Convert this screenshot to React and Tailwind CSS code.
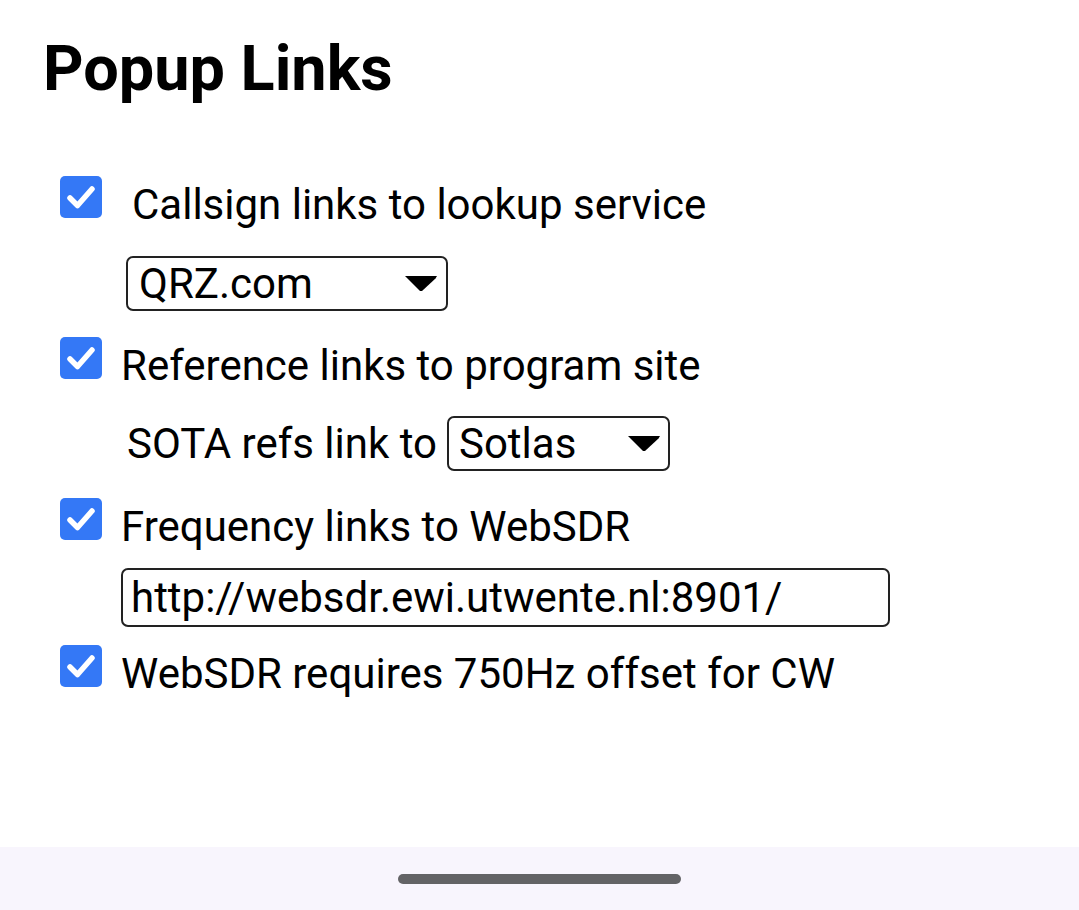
import React from 'react';

function Check() {
  return (
    <div className="w-[42px] h-[42px] rounded-[5px] bg-[#3478f6] flex items-center justify-center shrink-0">
      <svg viewBox="0 0 42 42" className="w-[42px] h-[42px]">
        <path d="M10 22l7.5 7.5L32 13" fill="none" stroke="white" strokeWidth="5.5" strokeLinecap="round" strokeLinejoin="round" />
      </svg>
    </div>
  );
}

function Caret() {
  return (
    <svg viewBox="0 0 32 15" className="w-[32px] h-[15px] shrink-0">
      <path d="M0 0h32l-1.5 2.5L17 15h-2z" fill="black" />
    </svg>
  );
}

export default function App() {
  return (
    <div className="w-[1079px] h-[910px] bg-white flex flex-col text-black" style={{ fontFamily: 'Roboto, "Liberation Sans", sans-serif' }}>
      <div className="flex-1 pl-[43px]">
        <h1 className="text-[63px] font-bold leading-none mt-[37px]">Popup Links</h1>

        <div className="mt-[76px] pl-[17px] flex flex-col text-[42px]">
          {/* Callsign */}
          <div className="flex items-start h-[42px]">
            <Check />
            <span className="leading-[49px] mt-[4px] ml-[30px] whitespace-nowrap">Callsign links to lookup service</span>
          </div>
          <div className="pl-[66px] mt-[38px]">
            <div className="w-[322px] h-[55px] border-2 border-[#222] rounded-[7px] flex items-center justify-between pl-[11px] pr-[9px]">
              <span className="leading-[49px]">QRZ.com</span>
              <Caret />
            </div>
          </div>

          {/* Reference */}
          <div className="flex items-start h-[42px] mt-[26px]">
            <Check />
            <span className="leading-[49px] mt-[4px] ml-[19px] whitespace-nowrap">Reference links to program site</span>
          </div>
          <div className="pl-[67px] mt-[37px] flex items-center">
            <span className="leading-[49px] mr-[10px] whitespace-nowrap">SOTA refs link to</span>
            <div className="w-[223px] h-[55px] border-2 border-[#222] rounded-[7px] flex items-center justify-between pl-[10px] pr-[8px]">
              <span className="leading-[49px]">Sotlas</span>
              <Caret />
            </div>
          </div>

          {/* Frequency */}
          <div className="flex items-start h-[42px] mt-[27px]">
            <Check />
            <span className="leading-[49px] mt-[4px] ml-[19px] whitespace-nowrap">Frequency links to WebSDR</span>
          </div>
          <div className="pl-[61px] mt-[28px]">
            <div className="w-[769px] h-[59px] border-2 border-[#222] rounded-[7px] flex items-center pl-[8px]">
              <span className="leading-[49px] whitespace-nowrap">http://websdr.ewi.utwente.nl:8901/</span>
            </div>
          </div>

          {/* Offset */}
          <div className="flex items-start h-[42px] mt-[18px]">
            <Check />
            <span className="leading-[49px] mt-[4px] ml-[19px] whitespace-nowrap">WebSDR requires 750Hz offset for CW</span>
          </div>
        </div>
      </div>

      <div className="h-[63px] bg-[#f8f5fd] flex items-center justify-center">
        <div className="w-[283px] h-[10px] rounded-full bg-[#636366]" />
      </div>
    </div>
  );
}
